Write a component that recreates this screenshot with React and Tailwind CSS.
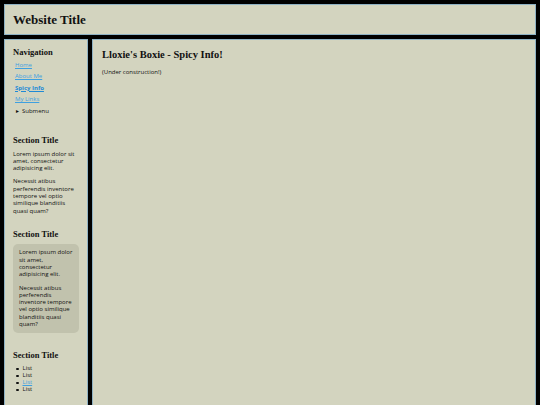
const NAV = [
  { label: 'Home' },
  { label: 'About Me' },
  { label: 'Spicy Info', active: true },
  { label: 'My Links' },
]

const serif = "font-['Liberation_Serif',Georgia,serif] font-bold text-[#111]"
const sans = "font-['Open_Sans',sans-serif]"

function SectionTitle({ children, className = '' }) {
  return <h2 className={`${serif} text-[8.5px] leading-[10px] ${className}`}>{children}</h2>
}

export default function App() {
  return (
    <div className={`${sans} h-[405px] overflow-hidden bg-black p-[4px] flex flex-col gap-[4px] text-[#111]`}>
      {/* Header */}
      <header className="h-[31px] shrink-0 border border-[#8fb2c4] bg-[#d3d4bf] flex items-center pl-[8px]">
        <h1 className={`${serif} text-[13px] leading-none`}>Website Title</h1>
      </header>

      <div className="flex gap-[4px] flex-1 min-h-0">
        {/* Sidebar */}
        <aside className="w-[84px] shrink-0 h-[420px] border border-[#8fb2c4] bg-[#d3d4bf] pt-[7px] pl-[8px] pr-[8px]">
          <SectionTitle className="mb-[3px]">Navigation</SectionTitle>
          <ul className="pl-[2px] text-[6px] leading-[11.4px]">
            {NAV.map((item) => (
              <li key={item.label}>
                <a
                  href="#"
                  className={`underline ${item.active ? 'font-bold text-[#1f8ad6]' : 'text-[#3ea0e0]'}`}
                >
                  {item.label}
                </a>
              </li>
            ))}
            <li>
              <span className="text-[5px] mr-[2px]">►</span>Submenu
            </li>
          </ul>

          <SectionTitle className="mt-[18px] mb-[5.5px]">Section Title</SectionTitle>
          <div className="text-[6px] leading-[7.3px] flex flex-col gap-[6px]">
            <p>Lorem ipsum dolor sit amet, consectetur adipisicing elit.</p>
            <p>Necessit atibus perferendis inventore tempore vel optio similique blanditiis quasi quam?</p>
          </div>

          <SectionTitle className="mt-[14px] mb-[5.5px]">Section Title</SectionTitle>
          <div className="rounded-[5px] bg-[#c1c2ad] pl-[6px] pr-[4px] py-[5px] text-[6px] leading-[7.3px] flex flex-col gap-[6px]">
            <p>Lorem ipsum dolor sit amet, consectetur adipisicing elit.</p>
            <p>Necessit atibus perferendis inventore tempore vel optio similique blanditiis quasi quam?</p>
          </div>

          <SectionTitle className="mt-[17px] mb-[5px]">Section Title</SectionTitle>
          <ul className="pl-[3px] text-[6px] leading-[7px]">
            {['List', 'List', 'link', 'List'].map((t, i) => (
              <li key={i} className="flex items-center gap-[4px]">
                <span className="w-[2.5px] h-[2.5px] rounded-full bg-[#111]" />
                {t === 'link' ? (
                  <a href="#" className="underline text-[#3ea0e0]">List</a>
                ) : (
                  <span>{t}</span>
                )}
              </li>
            ))}
          </ul>
        </aside>

        {/* Main */}
        <main className="flex-1 h-[420px] border border-[#8fb2c4] bg-[#d3d4bf] pt-[9px] px-[9px]">
          <h2 className={`${serif} text-[10.5px] leading-[12px]`}>Lloxie's Boxie - Spicy Info!</h2>
          <p className="mt-[8px] text-[6px] leading-[7px]">(Under construction!)</p>
        </main>
      </div>
    </div>
  )
}
